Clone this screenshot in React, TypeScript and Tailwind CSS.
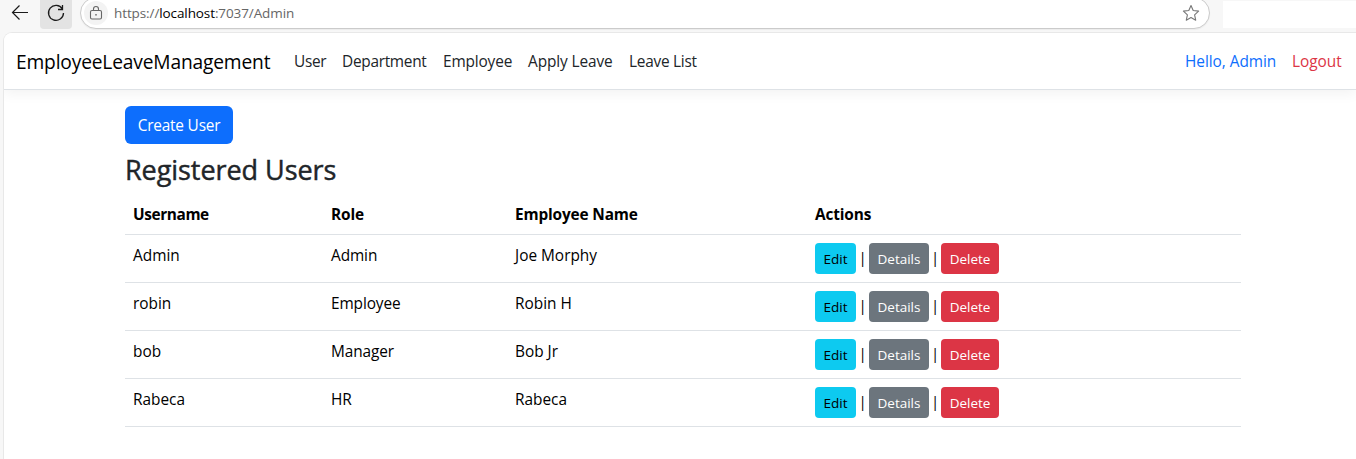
const users = [
  { username: "Admin", role: "Admin", name: "Joe Morphy" },
  { username: "robin", role: "Employee", name: "Robin H" },
  { username: "bob", role: "Manager", name: "Bob Jr" },
  { username: "Rabeca", role: "HR", name: "Rabeca" },
];

function BrowserBar() {
  return (
    <div className="flex h-8 shrink-0 items-start overflow-hidden">
      <button className="ml-2 flex h-[26px] w-6 items-center justify-center" aria-label="Back">
        <svg width="24" height="26" viewBox="0 0 24 26" fill="none" stroke="#1b1b1b" strokeWidth="1.2">
          <path d="M20 12.5H4.5M11.5 5.5l-7 7 7 7" />
        </svg>
      </button>
      <button className="ml-2 h-[29px] w-8 rounded-b-[4px] bg-[#e3e3e3]" aria-label="Reload">
        <svg width="32" height="29" viewBox="0 0 32 29" fill="none" stroke="#1b1b1b" strokeWidth="1.3">
          <path d="M22.4 9A7.5 7.5 0 1 0 23.5 13M22.5 5V9.5H18" />
        </svg>
      </button>
      <div className="-mt-[3px] ml-2 flex h-8 w-[1130px] shrink-0 items-center rounded-full border border-[#cbcbcb] bg-white shadow-[0_1px_1px_#0000000c]">
        <span className="ml-[3px] flex size-6 items-center justify-center rounded-full bg-[#f3f3f3]">
          <svg width="14" height="16" viewBox="0 0 14 16" fill="none" stroke="#666" strokeWidth="1.1">
            <rect x="1.5" y="5.5" width="11" height="8.5" rx="1.5" />
            <path d="M4.5 5.5V4a2.5 2.5 0 0 1 5 0v1.5" />
            <rect x="6.3" y="9.1" width="1.4" height="1.4" fill="#555" stroke="none" />
          </svg>
        </span>
        <span className="ml-1.5 text-[13.5px] leading-5 tracking-[-0.1px] text-[#666]">
          https://<span className="text-black">localhost</span>:7037/Admin
        </span>
        <svg className="mr-[9px] ml-auto" width="18" height="18" viewBox="0 0 18 18" fill="none" stroke="#777" strokeWidth="1.1" strokeLinejoin="round">
          <path d="M9 1.5l2.2 5 5.4.6-4 3.7 1.1 5.4L9 13.5l-4.7 2.7 1.1-5.4-4-3.7 5.4-.6z" />
        </svg>
      </div>
      <div className="mt-px ml-[13px] h-[27px] flex-1 bg-white" />
    </div>
  );
}

function Navbar() {
  return (
    <nav className="flex h-[57px] shrink-0 items-center border-b border-[#dee2e6] bg-white pt-0.5 pl-3 text-[15.4px] leading-6 tracking-[-0.04px] whitespace-nowrap text-[#212529] shadow-[0_4px_12px_#0000000d]">
      <a className="w-[278px] text-[19.2px] tracking-[-0.17px] text-black">EmployeeLeaveManagement</a>
      <a className="w-12 tracking-[-0.3px]">User</a>
      <a className="w-[101px] tracking-[-0.28px]">Department</a>
      <a className="w-[85px] tracking-[-0.15px]">Employee</a>
      <a className="w-[101px] tracking-[-0.1px]">Apply Leave</a>
      <a className="tracking-[-0.25px]">Leave List</a>
      <a className="ml-auto w-[107px] text-[#0d6efd]">Hello, Admin</a>
      <a className="w-[64px] text-[#dc3545]">Logout</a>
    </nav>
  );
}

function Actions() {
  return (
    <div className="-mt-px flex h-[31px] items-center text-[13.5px] leading-[21px] tracking-[-0.02px] text-white">
      <button className="h-[31px] w-[41px] rounded-[4px] bg-[#0dcaf0] pt-px text-black">Edit</button>
      <span className="w-[13px] pb-0.5 text-center text-[15px] text-black">|</span>
      <button className="h-[31px] w-[60px] rounded-[4px] bg-[#6c757d] pt-px">Details</button>
      <span className="w-3 pb-0.5 text-center text-[15px] text-black">|</span>
      <button className="h-[31px] w-[58px] rounded-[4px] bg-[#dc3545] pt-px">Delete</button>
    </div>
  );
}

export default function App() {
  return (
    <div className="flex h-[459px] w-full flex-col overflow-hidden bg-[#f7f7f7] font-['Open_Sans','Noto_Sans',sans-serif]">
      <BrowserBar />
      <div className="ml-[3px] flex flex-1 flex-col overflow-hidden rounded-tl-[9px] border-t border-l border-[#e8e8e8] bg-white">
        <Navbar />
        <main className="ml-[121px] w-[1116px] pt-4 text-[15.4px] leading-6 text-black">
          <button className="block h-[38px] w-[108px] rounded-[6px] bg-[#0d6efd] pt-0.5 tracking-[-0.2px] text-white">
            Create User
          </button>
          <h2 className="mt-[9px] mb-[7px] h-[34px] text-[27px] leading-[34px] font-medium tracking-[-0.06px] whitespace-nowrap text-[#212529] [-webkit-text-stroke:0.45px_#212529]">
            Registered Users
          </h2>
          <table className="w-full table-fixed border-separate border-spacing-0 text-left">
            <thead>
              <tr className="[&>th]:border-b [&>th]:border-[#dee2e6] [&>th]:px-2 [&>th]:pt-[9px] [&>th]:pb-[7px] [&>th]:font-bold [&>th]:tracking-[-0.15px]">
                <th className="w-[198px]"><span className="tracking-[-0.4px]">Username</span></th>
                <th className="w-[184px]">Role</th>
                <th className="w-[300px]">Employee Name</th>
                <th>Actions</th>
              </tr>
            </thead>
            <tbody>
              {users.map((u) => (
                <tr key={u.username} className="align-top [&>td]:h-12 [&>td]:border-b [&>td]:border-[#dee2e6] [&>td]:px-2 [&>td]:pt-[9px] [&>td]:pb-[7px]">
                  <td>{u.username}</td>
                  <td className="tracking-[-0.1px]">{u.role}</td>
                  <td>{u.name}</td>
                  <td><Actions /></td>
                </tr>
              ))}
            </tbody>
          </table>
        </main>
      </div>
    </div>
  );
}
